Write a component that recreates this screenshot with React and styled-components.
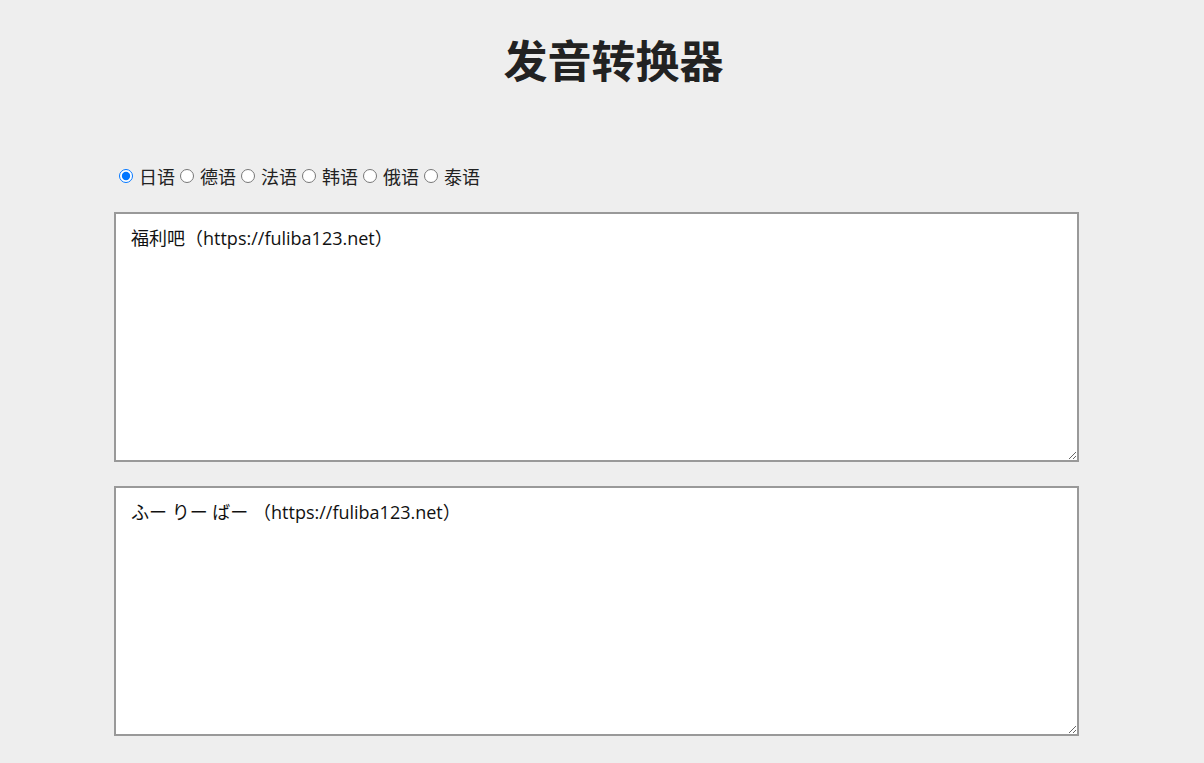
import React, { useState } from "react";
import styled, { createGlobalStyle } from "styled-components";

const Global = createGlobalStyle`
  html, body { margin: 0; padding: 0; background: #eeeeee; }
  body { font-family: "Open Sans", "Noto Sans CJK SC", sans-serif; color: #222; }
`;

const Page = styled.div`
  width: 965px;
  margin-left: 114px;
  padding-top: 27px;
`;

const Title = styled.h1`
  margin: 0;
  padding-left: 34px;
  text-align: center;
  font-family: "Noto Sans CJK SC", sans-serif;
  font-size: 44px;
  font-weight: 700;
  line-height: 64px;
  color: #222;
`;

const Options = styled.div`
  margin-top: 73px;
  display: flex;
  align-items: center;
  font-family: "Noto Sans CJK SC", sans-serif;
  font-size: 18px;
  line-height: 24px;
  color: #222;
`;

const Option = styled.label`
  display: inline-flex;
  align-items: center;
  input { margin: 0 6px 0 5px; width: 14px; height: 14px; }
`;

const Area = styled.textarea`
  display: block;
  box-sizing: border-box;
  width: 965px;
  height: 250px;
  margin-top: ${(p) => p.$top}px;
  border: 2px solid #999;
  background: #fff;
  padding: 13px 15px;
  font-family: "Open Sans", "Noto Sans CJK SC", sans-serif;
  font-size: 18px;
  line-height: 22px;
  color: #111;
  outline: none;
`;

const langs = ["日语", "德语", "法语", "韩语", "俄语", "泰语"];

export default function App() {
  const [lang, setLang] = useState("日语");
  return (
    <>
      <Global />
      <Page>
        <Title>发音转换器</Title>
        <Options>
          {langs.map((l) => (
            <Option key={l}>
              <input type="radio" name="lang" checked={lang === l} onChange={() => setLang(l)} />
              {l}
            </Option>
          ))}
        </Options>
        <Area $top={24} defaultValue="福利吧（https://fuliba123.net）" />
        <Area $top={24} defaultValue="ふー りー ばー （https://fuliba123.net）" />
      </Page>
    </>
  );
}
